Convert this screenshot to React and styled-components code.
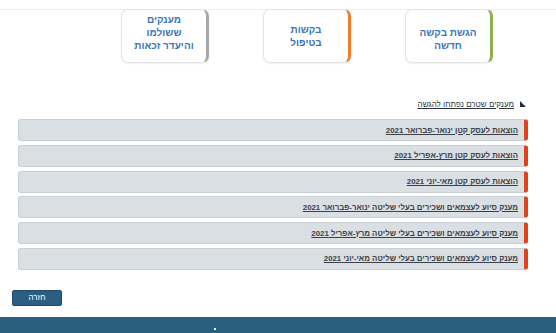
import React from "react";
import styled, { createGlobalStyle } from "styled-components";

const Global = createGlobalStyle`
  html, body { margin: 0; padding: 0; background: #fff; }
  body { font-family: "Liberation Sans", Arial, sans-serif; }
`;

const Page = styled.div`
  width: 556px;
  height: 333px;
  overflow: hidden;
  display: flex;
  flex-direction: column;
  direction: rtl;
`;

const TopLine = styled.div`
  margin-top: 9px;
  border-top: 1px solid #ececec;
`;

const Cards = styled.div`
  display: flex;
  gap: 54px;
  padding-right: 63px;
`;

const Card = styled.a`
  box-sizing: border-box;
  width: 88px;
  height: 54px;
  margin-top: -1px;
  padding: ${(p) => p.$pt}px 0 ${(p) => p.$pb}px;
  border: 1px solid #e4e4e4;
  border-right: 3px solid ${(p) => p.$accent};
  border-radius: 7px;
  background: #fff;
  box-shadow: 0 1px 2px rgba(0, 0, 0, 0.06);
  display: flex;
  align-items: center;
  justify-content: center;
  text-align: center;
  color: #3a76b6;
  font-weight: bold;
  font-size: 10px;
  line-height: 13px;
  text-decoration: none;
`;

const LinkRow = styled.div`
  margin-top: 35px;
  padding-right: 30px;
  display: flex;
  align-items: center;
  gap: 6px;
  height: 12px;
`;

const Tri = styled.svg`
  width: 6px;
  height: 6px;
  flex: none;
`;

const SmallLink = styled.a`
  font-size: 8px;
  color: #2b3440;
  text-decoration: underline;
`;

const List = styled.div`
  margin: 9px 28px 0 18px;
  display: flex;
  flex-direction: column;
  gap: 3.8px;
`;

const Row = styled.div`
  box-sizing: border-box;
  height: 22px;
  background: #d9dfe3;
  border: 1px solid #c9d0d5;
  border-right: 4px solid #e0421b;
  border-radius: 3px;
  display: flex;
  align-items: center;
  padding-right: 6px;
`;

const RowLink = styled.a`
  font-size: 7.85px;
  font-weight: bold;
  color: #3b4148;
  text-decoration: underline;
`;

const ButtonArea = styled.div`
  margin-top: 20px;
  padding-left: 12px;
  display: flex;
  direction: ltr;
`;

const BackButton = styled.button`
  width: 50px;
  height: 16px;
  background: #2b5e82;
  border: 1px solid #1f4a69;
  border-radius: 2px;
  color: #fff;
  font-family: "Liberation Sans", Arial, sans-serif;
  font-size: 8px;
  padding: 0;
  direction: rtl;
`;

const Footer = styled.div`
  margin-top: 11px;
  flex: 1;
  background: #2b5f80;
  position: relative;
`;

const FooterDot = styled.span`
  position: absolute;
  left: 214px;
  top: 11px;
  width: 2px;
  height: 2px;
  background: #fff;
`;

const cards = [
  { accent: "#8db04f", pt: 5, pb: 0, lines: ["הגשת בקשה", "חדשה"] },
  { accent: "#ef7d2b", pt: 0, pb: 1, lines: ["בקשות", "בטיפול"] },
  { accent: "#a8a8a8", pt: 0, pb: 8, lines: ["מענקים", "ששולמו", "והיעדר זכאות"] },
];

const rows = [
  "הוצאות לעסק קטן ינואר-פברואר 2021",
  "הוצאות לעסק קטן מרץ-אפריל 2021",
  "הוצאות לעסק קטן מאי-יוני 2021",
  "מענק סיוע לעצמאים ושכירים בעלי שליטה ינואר-פברואר 2021",
  "מענק סיוע לעצמאים ושכירים בעלי שליטה מרץ-אפריל 2021",
  "מענק סיוע לעצמאים ושכירים בעלי שליטה מאי-יוני 2021",
];

export default function App() {
  return (
    <>
      <Global />
      <Page>
        <TopLine />
        <Cards>
          {cards.map((c, i) => (
            <Card key={i} href="#" $accent={c.accent} $pt={c.pt} $pb={c.pb}>
              <span>
                {c.lines.map((l, j) => (
                  <React.Fragment key={j}>
                    {l}
                    {j < c.lines.length - 1 && <br />}
                  </React.Fragment>
                ))}
              </span>
            </Card>
          ))}
        </Cards>
        <LinkRow>
          <Tri viewBox="0 0 6 6">
            <polygon points="0,0 6,6 0,6" fill="#1d2f4a" />
          </Tri>
          <SmallLink href="#">מענקים שטרם נפתחו להגשה</SmallLink>
        </LinkRow>
        <List>
          {rows.map((r, i) => (
            <Row key={i}>
              <RowLink href="#">{r}</RowLink>
            </Row>
          ))}
        </List>
        <ButtonArea>
          <BackButton>חזרה</BackButton>
        </ButtonArea>
        <Footer>
          <FooterDot />
        </Footer>
      </Page>
    </>
  );
}
